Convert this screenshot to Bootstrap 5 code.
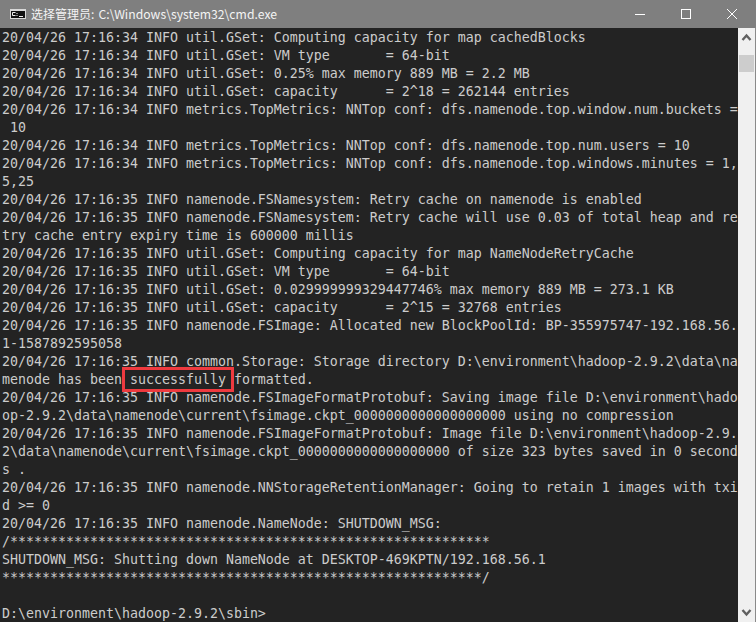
<!DOCTYPE html>
<html lang="zh"><head><meta charset="utf-8"><title>cmd</title>
<link href="https://cdn.jsdelivr.net/npm/bootstrap@5.3.0/dist/css/bootstrap.min.css" rel="stylesheet">
<style>
html,body{height:622px;overflow:hidden;background:#232323}
.win-frame{width:756px;height:622px}
.title-strip{height:28px;background:#7f7f7f;color:#f4f4f4;font:12px "Noto Sans CJK SC","Liberation Sans",sans-serif;padding-left:10px}
.title-strip .ttl{margin-left:5px;word-spacing:1.5px}
.title-path{font-size:12.2px;letter-spacing:.02px}
.win-ctl{width:46px;height:28px}
.win-ctl-wrap{margin-right:1px}
.term-body{height:594px}
.term-out{flex:1;margin:0;padding:1px 0 0 2px;overflow:hidden;background:#232323;color:#ccc;font:13.29px/18px "DejaVu Sans Mono","Liberation Mono",monospace;white-space:pre}
.scroll-track{width:17px;background:#f0f0f0;flex:none}
.scroll-edge{width:1px;background:#8a8a8a;flex:none}
.scroll-thumb{height:17px;background:#cdcdcd;margin:13px 1px 0}
.hit{border:3px solid #ee3a3f;padding:2px 5px;margin:0 -8px}
</style></head><body>
<div class="win-frame d-flex flex-column">
<div class="title-strip d-flex align-items-center">
<svg width="16" height="10" viewBox="0 0 16 10"><rect width="16" height="10" fill="#d8d8d8"/><rect x="1" y="2" width="14" height="7" fill="#111"/><path d="M2.5 3.5h3M2.5 3.5v3h3M6.5 4.5h1M6.5 6.5h1M9 7.5h4" stroke="#eee" fill="none"/></svg>
<span class="ttl">选择管理员: <span class="title-path">C:\Windows\system32\cmd.exe</span></span>
<div class="ms-auto d-flex win-ctl-wrap">
<div class="win-ctl d-flex align-items-center justify-content-center"><svg width="12" height="12" viewBox="0 0 12 12"><path d="M1 6.5h10" stroke="#fff"/></svg></div>
<div class="win-ctl d-flex align-items-center justify-content-center"><svg width="12" height="12" viewBox="0 0 12 12"><rect x="1.5" y="1.5" width="9" height="9" fill="none" stroke="#fff"/></svg></div>
<div class="win-ctl d-flex align-items-center justify-content-center"><svg width="12" height="12" viewBox="0 0 12 12"><path d="M1 1l10 10M11 1L1 11" stroke="#fff"/></svg></div>
</div>
</div>
<div class="term-body d-flex">
<pre class="term-out">20/04/26 17:16:34 INFO util.GSet: Computing capacity for map cachedBlocks
20/04/26 17:16:34 INFO util.GSet: VM type       = 64-bit
20/04/26 17:16:34 INFO util.GSet: 0.25% max memory 889 MB = 2.2 MB
20/04/26 17:16:34 INFO util.GSet: capacity      = 2^18 = 262144 entries
20/04/26 17:16:34 INFO metrics.TopMetrics: NNTop conf: dfs.namenode.top.window.num.buckets =
 10
20/04/26 17:16:34 INFO metrics.TopMetrics: NNTop conf: dfs.namenode.top.num.users = 10
20/04/26 17:16:34 INFO metrics.TopMetrics: NNTop conf: dfs.namenode.top.windows.minutes = 1,
5,25
20/04/26 17:16:35 INFO namenode.FSNamesystem: Retry cache on namenode is enabled
20/04/26 17:16:35 INFO namenode.FSNamesystem: Retry cache will use 0.03 of total heap and re
try cache entry expiry time is 600000 millis
20/04/26 17:16:35 INFO util.GSet: Computing capacity for map NameNodeRetryCache
20/04/26 17:16:35 INFO util.GSet: VM type       = 64-bit
20/04/26 17:16:35 INFO util.GSet: 0.029999999329447746% max memory 889 MB = 273.1 KB
20/04/26 17:16:35 INFO util.GSet: capacity      = 2^15 = 32768 entries
20/04/26 17:16:35 INFO namenode.FSImage: Allocated new BlockPoolId: BP-355975747-192.168.56.
1-1587892595058
20/04/26 17:16:35 INFO common.Storage: Storage directory D:\environment\hadoop-2.9.2\data\na
menode has been <span class="hit">successfully</span> formatted.
20/04/26 17:16:35 INFO namenode.FSImageFormatProtobuf: Saving image file D:\environment\hado
op-2.9.2\data\namenode\current\fsimage.ckpt_0000000000000000000 using no compression
20/04/26 17:16:35 INFO namenode.FSImageFormatProtobuf: Image file D:\environment\hadoop-2.9.
2\data\namenode\current\fsimage.ckpt_0000000000000000000 of size 323 bytes saved in 0 second
s .
20/04/26 17:16:35 INFO namenode.NNStorageRetentionManager: Going to retain 1 images with txi
d &gt;= 0
20/04/26 17:16:35 INFO namenode.NameNode: SHUTDOWN_MSG:
/************************************************************
SHUTDOWN_MSG: Shutting down NameNode at DESKTOP-469KPTN/192.168.56.1
************************************************************/

D:\environment\hadoop-2.9.2\sbin&gt;</pre>
<div class="scroll-track d-flex flex-column">
<svg class="d-block mt-1" width="17" height="10" viewBox="0 0 17 10"><path d="M4.5 8l4-4.5 4 4.5" stroke="#606060" stroke-width="2.4" fill="none"/></svg>
<div class="scroll-thumb"></div>
<svg class="d-block mt-auto mb-1" width="17" height="10" viewBox="0 0 17 10"><path d="M4.5 2l4 4.5 4-4.5" stroke="#606060" stroke-width="2.4" fill="none"/></svg>
</div>
<div class="scroll-edge"></div>
</div>
</div>
</body></html>
